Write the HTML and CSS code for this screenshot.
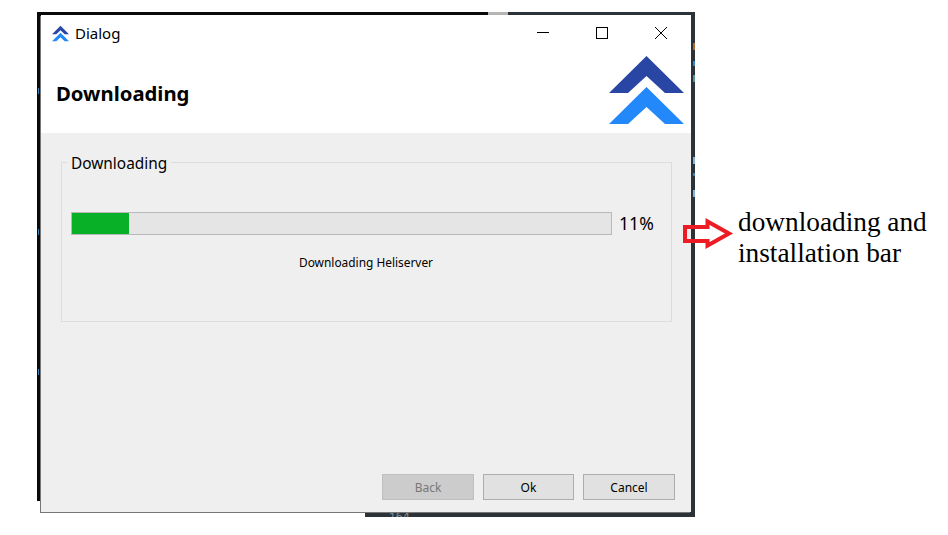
FILE: index.html
```html
<!DOCTYPE html>
<html lang="en">
<head>
  <meta charset="UTF-8">
  <title>Dialog</title>
  <link rel="stylesheet" href="styles.css">
</head>
<body>
  <svg class="defs" width="0" height="0">
    <symbol id="logo" viewBox="0 0 75 68">
      <polygon fill="#2a46a5" points="37.5,0 75,37 56,37 37.5,20 19,37 0,37"/>
      <polygon fill="#2389fb" points="37.5,31 75,68 56,68 37.5,51 19,68 0,68"/>
    </symbol>
  </svg>

  <div class="page">
    <div class="frame">
      <div class="dialog">
        <div class="top">
          <div class="titlebar">
            <svg class="app-icon"><use href="#logo"/></svg>
            <span class="title">Dialog</span>
            <div class="controls">
              <svg width="14" height="14" viewBox="0 0 14 14"><path d="M1 6.5H13" stroke="#000" fill="none"/></svg>
              <svg width="14" height="14" viewBox="0 0 14 14"><rect x="1.5" y="1.5" width="11" height="11" stroke="#000" fill="none"/></svg>
              <svg width="14" height="14" viewBox="0 0 14 14"><path d="M1 1L13 13M13 1L1 13" stroke="#000" fill="none"/></svg>
            </div>
          </div>
          <div class="banner">
            <h1>Downloading</h1>
            <svg class="banner-logo"><use href="#logo"/></svg>
          </div>
        </div>

        <div class="content">
          <fieldset class="group">
            <legend>Downloading</legend>
            <div class="progress-row">
              <div class="progress"><div class="progress-fill" style="width: 57px"></div></div>
              <span class="percent">11%</span>
            </div>
            <p class="status">Downloading Heliserver</p>
          </fieldset>

          <div class="buttons">
            <button class="btn" disabled>Back</button>
            <button class="btn btn-ok">Ok</button>
            <button class="btn">Cancel</button>
          </div>
        </div>
      </div>
      <div class="behind">164</div>
    </div>

    <svg class="arrow" width="52" height="32" viewBox="0 0 52 32">
      <path d="M3 9H25.5V3.5L47 15.5L25.5 27.5V23H3Z" fill="none" stroke="#ed1c24" stroke-width="4"/>
    </svg>

    <p class="note">downloading and<br>installation bar</p>
  </div>
</body>
</html>
```

FILE: styles.css
```css
body {
  margin: 0;
  background: #fff;
  font-family: "Noto Sans", sans-serif;
  color: #000;
}
.defs {
  position: absolute;
}
.page {
  display: flex;
  align-items: flex-start;
  padding: 12px 0 0 37px;
}
/* window edge plus the bits of the app behind it that show through */
.frame {
  position: relative;
  width: 658px;
  height: 505px;
  padding: 3px 4px 0 4px;
  box-sizing: border-box;
  background:
    linear-gradient(to right, #0a0a0a 451px, #b5b5b5 451px, #b5b5b5 471px, #2b3238 471px) top / 100% 3px no-repeat,
    linear-gradient(transparent 31px, #a8692e 31px, #a8692e 38px, transparent 38px, transparent 49px, #2f86c8 49px, #2f86c8 54px, transparent 54px, transparent 63px, #4e9a92 63px, #4e9a92 70px, transparent 70px, transparent 145px, #7fb3dc 145px, #7fb3dc 152px, transparent 152px, transparent 161px, #3a7fb5 161px, #3a7fb5 164px, transparent 164px, transparent 178px, #7fb3dc 178px, #7fb3dc 185px, transparent 185px) right top / 2px 100% no-repeat,
    linear-gradient(transparent 76px, #3a7fb5 76px, #3a7fb5 82px, transparent 82px, transparent 217px, #3a7fb5 217px, #3a7fb5 223px, transparent 223px, transparent 357px, #3a7fb5 357px, #3a7fb5 363px, transparent 363px) 1px top / 1px 489px no-repeat,
    linear-gradient(#0a0a0a, #0a0a0a) left top / 4px 489px no-repeat,
    linear-gradient(#2b3238, #2b3238) right top / 4px 100% no-repeat,
    linear-gradient(#2b3238, #2b3238) right bottom / 330px 100% no-repeat;
}
.dialog {
  position: relative;
  z-index: 1;
  display: flex;
  flex-direction: column;
  height: 497px;
  background: #efefef;
  box-shadow: -1px 1px 0 #777;
}
.behind {
  position: absolute;
  left: 352px;
  top: 498px;
  font-size: 12px;
  color: #8a8f94;
  line-height: 14px;
}

.top {
  background: #fff;
  height: 118px;
}
.titlebar {
  display: flex;
  align-items: center;
  height: 41px;
  padding: 0 0 5px 11px;
  box-sizing: border-box;
}
.app-icon {
  width: 17px;
  height: 17px;
}
.title {
  margin-left: 6px;
  font-size: 15px;
}
.controls {
  display: flex;
  gap: 45px;
  margin-left: auto;
  margin-right: 23px;
}
.banner {
  display: flex;
  justify-content: space-between;
  align-items: flex-start;
  padding: 0 7px 0 15px;
}
.banner h1 {
  margin: 23px 0 0;
  font-size: 20.3px;
  line-height: 28px;
  font-weight: bold;
}
.banner-logo {
  width: 75px;
  height: 68px;
}

.content {
  flex: 1;
  display: flex;
  flex-direction: column;
}
.group {
  margin: 17px 0 0 20px;
  padding: 0 9px;
  width: 611px;
  height: 172px;
  box-sizing: border-box;
  border: 1px solid #dcdcdc;
}
.group legend {
  padding: 4px 4px 0;
  margin-left: -4px;
  font-size: 15.4px;
  line-height: 20px;
}
.progress-row {
  display: flex;
  align-items: center;
  margin-top: 38px;
}
.progress {
  width: 541px;
  height: 23px;
  box-sizing: border-box;
  border: 1px solid #b9b9b9;
  background: #e5e5e5;
}
.progress-fill {
  height: 100%;
  background: #07b027;
}
.percent {
  margin-left: 7px;
  font-size: 17.6px;
  line-height: 23px;
}
.status {
  margin: 19px 0 0;
  text-align: center;
  font-size: 11.9px;
  line-height: 17px;
  padding-right: 1px;
}
.buttons {
  display: flex;
  justify-content: flex-end;
  gap: 9px;
  margin-top: auto;
  padding: 0 16px 12px 0;
}
.btn {
  width: 92px;
  height: 26px;
  padding: 0;
  border: 1px solid #adadad;
  border-radius: 0;
  background: #e1e1e1;
  color: #000;
  font-family: "Noto Sans", sans-serif;
  font-size: 12px;
}
.btn-ok {
  width: 91px;
}
.btn:disabled {
  background: #cccccc;
  border-color: #bfbfbf;
  color: #787878;
}

.arrow {
  margin: 206px 0 0 -13px;
  position: relative;
  z-index: 2;
}
.note {
  margin: 195px 0 0 4px;
  font-family: "Liberation Serif", serif;
  font-size: 27.3px;
  line-height: 31px;
  white-space: nowrap;
}
```
